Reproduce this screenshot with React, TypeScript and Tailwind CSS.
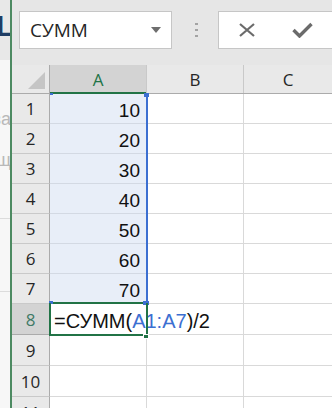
const rows = [
  { n: 1, v: "10", h: 30 },
  { n: 2, v: "20", h: 30 },
  { n: 3, v: "30", h: 30 },
  { n: 4, v: "40", h: 30 },
  { n: 5, v: "50", h: 30 },
  { n: 6, v: "60", h: 30 },
  { n: 7, v: "70", h: 30 },
  { n: 8, v: "", h: 31 },
  { n: 9, v: "", h: 31 },
  { n: 10, v: "", h: 31 },
  { n: 11, v: "", h: 31 },
]

const heights: Record<number, string> = {
  30: "h-[30px]",
  31: "h-[31px]",
}

function NameBox() {
  return (
    <div className="ml-[7px] mt-[11px] flex h-[38px] w-[153px] items-center justify-between border border-[#c6c6c6] bg-white pl-[10px] pr-[10px]">
      <span className="text-[19px] leading-none text-[#262626] [font-family:'Open_Sans',sans-serif]">
        СУММ
      </span>
      <svg width="10" height="7" viewBox="0 0 10 7">
        <path d="M0 0 L10 0 L5 6 Z" fill="#6e6e6e" />
      </svg>
    </div>
  )
}

function FormulaButtons() {
  return (
    <div className="mt-[11px] flex h-[38px] flex-1 items-center gap-[36px] border border-r-0 border-[#c6c6c6] bg-white pl-[19px]">
      <svg width="18" height="14" viewBox="0 0 18 14">
        <path d="M2 1 L16 13 M16 1 L2 13" stroke="#6b6b6b" strokeWidth="2.2" fill="none" />
      </svg>
      <svg width="21" height="16" viewBox="0 0 21 16">
        <path d="M1.5 8 L7.5 14 L19.5 2" stroke="#6b6b6b" strokeWidth="3.4" fill="none" />
      </svg>
    </div>
  )
}

export default function App() {
  return (
    <div className="flex h-[408px] w-[332px] overflow-hidden bg-white [font-family:'Liberation_Sans',Arial,sans-serif]">
      {/* window behind, cut off */}
      <div className="flex w-[10px] shrink-0 flex-col overflow-hidden">
        <div className="flex h-[60px] shrink-0 items-start bg-[#e8e8e8] pt-[11px]">
          <span className="-ml-[4px] text-[30px] font-bold leading-none text-[#1f3d64]">L</span>
        </div>
        <div className="flex flex-1 flex-col items-end bg-[#f7f7f7] text-[18px] leading-none text-[#b9b9b9]">
          <span className="mt-[50px] -mr-[1px] whitespace-nowrap">за</span>
          <span className="mt-[23px] -mr-[1px] whitespace-nowrap">щ</span>
          <div className="mt-[49px] h-px w-full bg-[#dcdcdc]" />
          <div className="mt-[72px] h-px w-full bg-[#dcdcdc]" />
        </div>
      </div>
      <div className="w-[2px] shrink-0 bg-[#4d8a62]" />

      <div className="flex flex-1 flex-col bg-[#e6e6e6]">
        {/* name box + formula buttons */}
        <div className="flex h-[65px] shrink-0 items-start">
          <NameBox />
          <div className="ml-[23px] mt-[23px] flex flex-col gap-[4px]">
            <div className="h-[2px] w-[3px] bg-[#a3a3a3]" />
            <div className="h-[2px] w-[3px] bg-[#a3a3a3]" />
            <div className="h-[2px] w-[3px] bg-[#a3a3a3]" />
          </div>
          <div className="ml-[20px] flex flex-1">
            <FormulaButtons />
          </div>
        </div>

        {/* column headers */}
        <div className="grid h-[29px] shrink-0 grid-cols-[38px_97px_97px_1fr] border-b border-[#ababab] bg-[#e9e9e9] text-[17px] leading-none [font-family:'Open_Sans',sans-serif]">
          <div className="relative border-r border-[#ababab]">
            <svg className="absolute bottom-[4px] right-[4px]" width="17" height="17" viewBox="0 0 17 17">
              <path d="M17 0 L17 17 L0 17 Z" fill="#c5c5c5" />
            </svg>
          </div>
          <div className="relative flex items-center justify-center border-r border-[#c9c9c9] bg-[#d3d3d3] text-[#217346]">
            A
            <div className="absolute bottom-[-1px] left-0 right-0 h-[2px] bg-[#217346]" />
          </div>
          <div className="flex items-center justify-center border-r border-[#c9c9c9] text-[#262626]">B</div>
          <div className="flex items-center justify-center text-[#262626]">C</div>
        </div>

        {/* cells */}
        <div className="relative shrink-0 bg-white">
          {rows.map((r) => {
            const active = r.n === 8
            const inRange = r.n <= 7
            return (
              <div
                key={r.n}
                className={`grid shrink-0 grid-cols-[38px_97px_97px_1fr] ${heights[r.h]}`}
              >
                <div
                  className={`flex items-center justify-center border-b border-r border-[#ababab] text-[17px] leading-none [font-family:'Open_Sans',sans-serif] ${
                    active ? "bg-[#d3d3d3] text-[#3f7a66]" : "border-b-[#c9c9c9] bg-[#e9e9e9] text-[#262626]"
                  }`}
                >
                  {r.n}
                </div>
                <div
                  className={`flex items-end justify-end border-b border-r pb-[3px] pr-[6px] text-[19px] leading-none text-[#111] ${
                    inRange ? "border-[#d3d9e3] bg-[#e8eef8]" : "border-[#d9d9d9]"
                  }`}
                >
                  {r.v}
                </div>
                <div className="border-b border-r border-[#d9d9d9]" />
                <div className="border-b border-[#d9d9d9]" />
              </div>
            )
          })}

          {/* formula being typed into A8, overflows into B */}
          <div className="absolute left-[42px] top-[217px] whitespace-nowrap text-[20px] leading-none text-[#111]">
            =СУММ(<span className="text-[#3c6fd1]">A1:A7</span>)/2
          </div>

          {/* range reference A1:A7 */}
          <div className="absolute left-[134px] top-[3px] h-[207px] w-[2px] bg-[#3c6fd1]" />
          <div className="absolute left-[38px] top-[-1px] h-[2px] w-[3px] bg-[#3c6fd1]" />
          <div className="absolute left-[132px] top-[-1px] h-[4px] w-[5px] bg-[#3c6fd1]" />
          <div className="absolute left-[37px] top-[207px] h-[3px] w-[4px] bg-[#3c6fd1]" />
          <div className="absolute left-[131px] top-[207px] h-[4px] w-[6px] bg-[#3c6fd1]" />

          {/* active cell A8 */}
          <div className="absolute left-[37px] top-[209px] h-[33px] w-[99px] border-2 border-t-0 border-[#217346]" />
          <div className="absolute left-[41px] top-[208px] h-[2px] w-[90px] bg-[#217346]" />
          <div className="absolute left-[131px] top-[240px] h-[5px] w-[6px] border border-white bg-[#217346]" />
        </div>
      </div>
    </div>
  )
}
